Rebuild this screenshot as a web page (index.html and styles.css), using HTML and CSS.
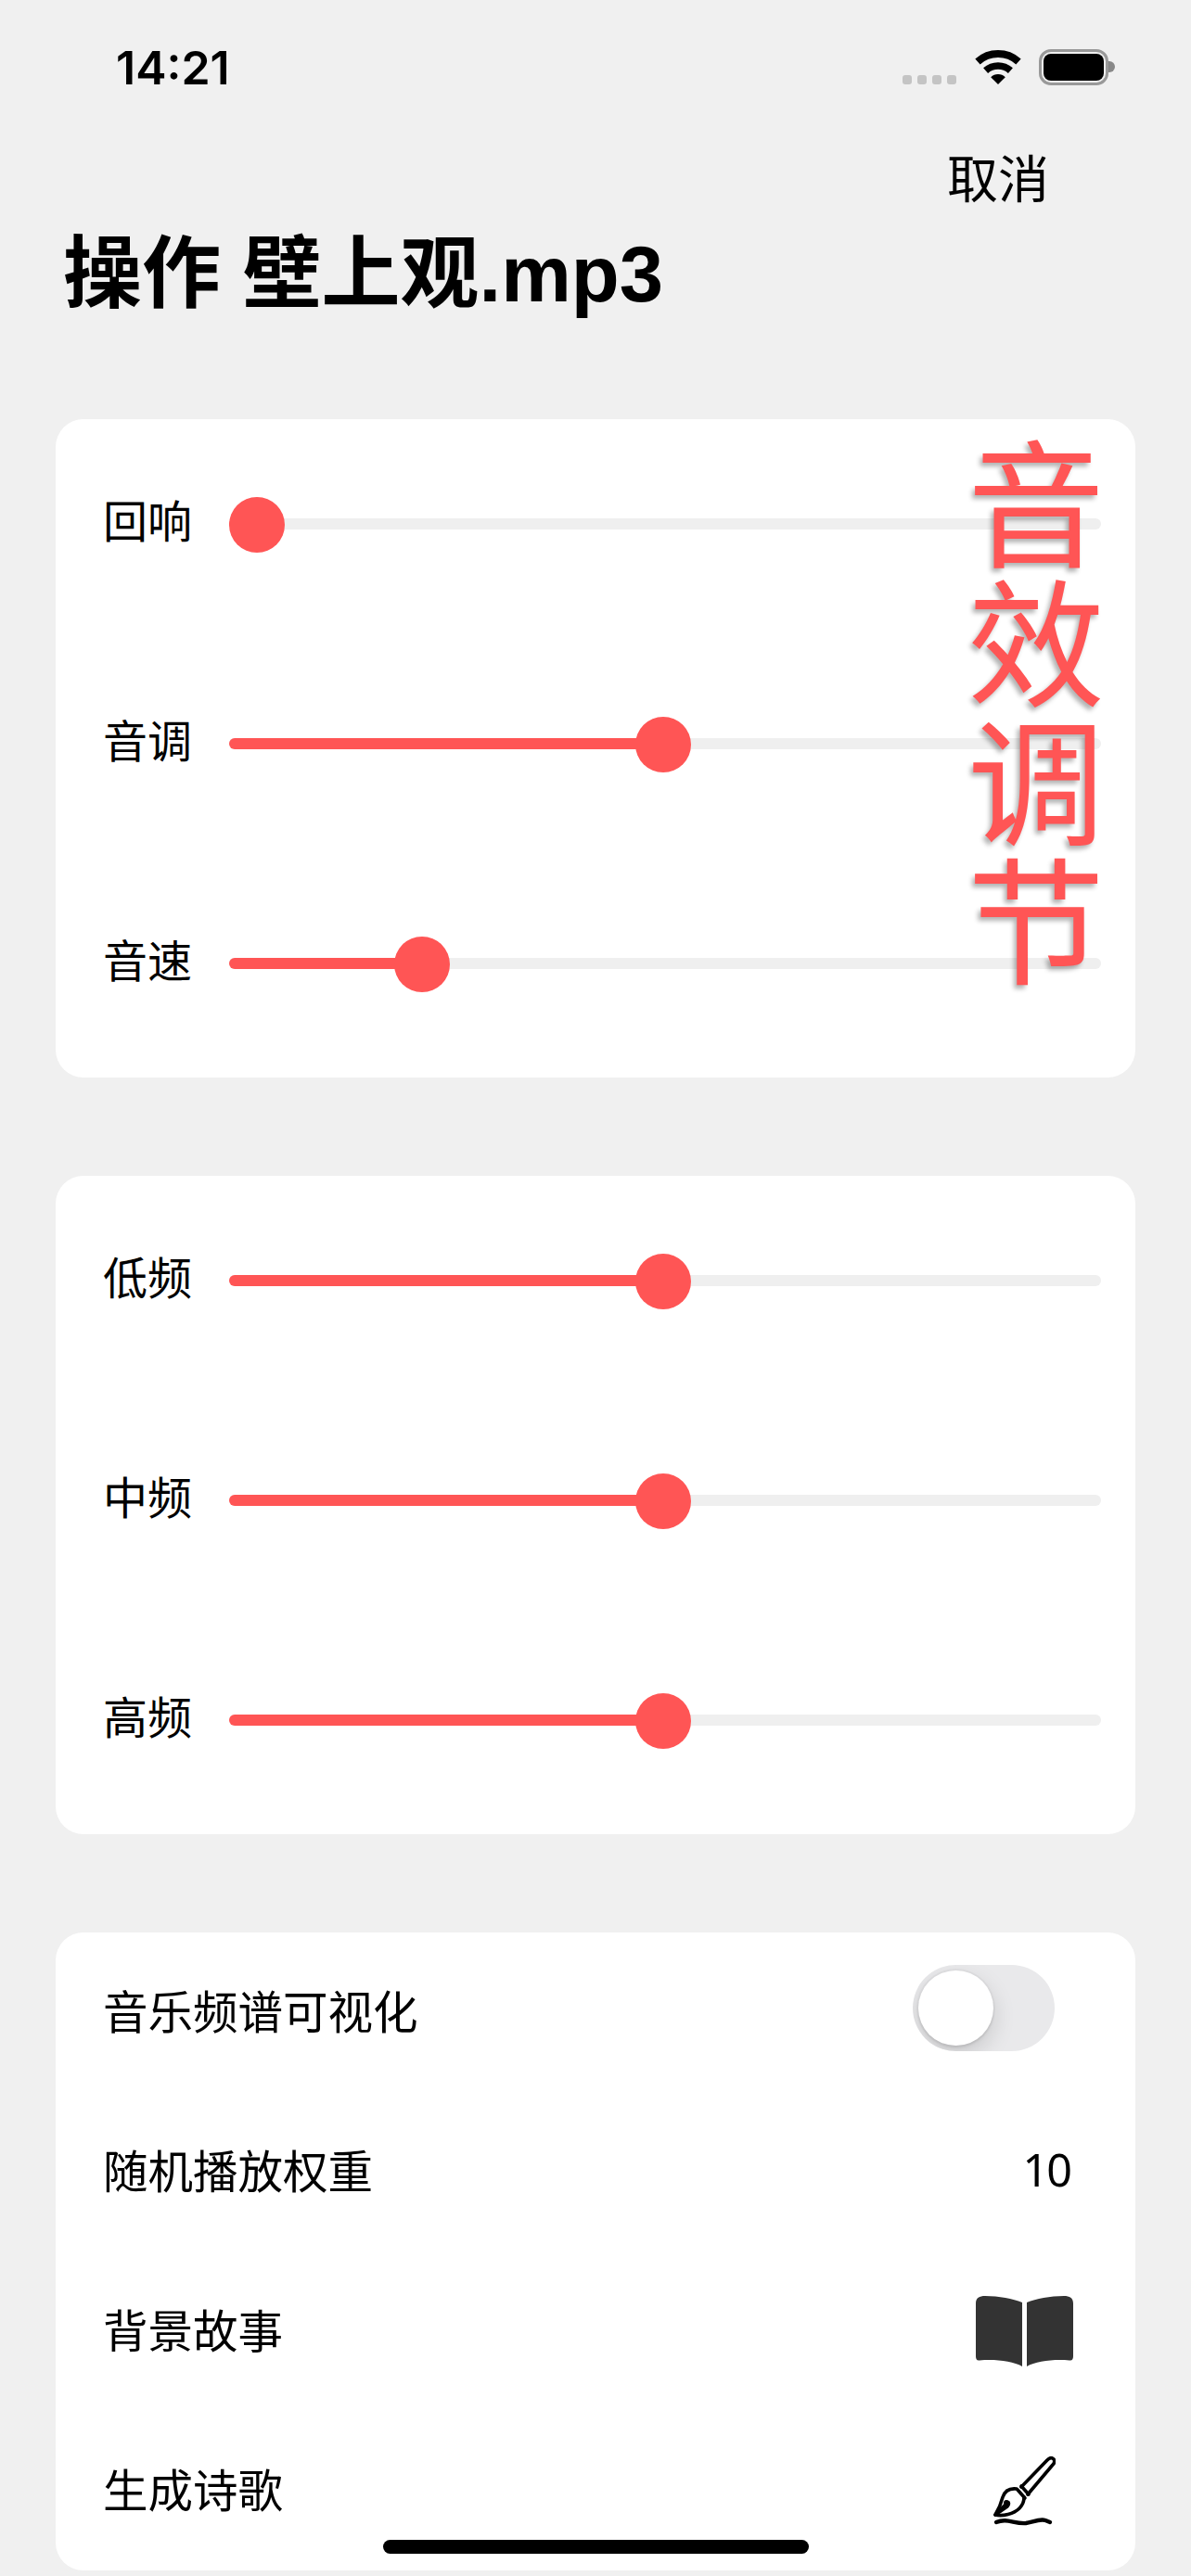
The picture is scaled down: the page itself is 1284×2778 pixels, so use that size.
FILE: index.html
```html
<!DOCTYPE html>
<html lang="zh-CN">
<head>
  <meta charset="UTF-8">
  <title>操作 壁上观.mp3</title>
  <link rel="stylesheet" href="styles.css">
</head>
<body>

<header class="status-bar">
  <span class="time">14:21</span>
  <div class="status-icons">
    <div class="signal"><i></i><i></i><i></i><i></i></div>
    <svg class="wifi" width="50" height="37" viewBox="0 0 50 37">
      <path d="M3 12.5A33 33 0 0 1 47 12.5" fill="none" stroke="#000" stroke-width="8"/>
      <path d="M11.6 22.1A20 20 0 0 1 38.4 22.1" fill="none" stroke="#000" stroke-width="7.5"/>
      <path d="M25 37L17.2 29.2A11 11 0 0 1 32.8 29.2Z"/>
    </svg>
    <div class="battery"><div class="battery-level"></div></div>
    <div class="battery-nub"></div>
  </div>
</header>

<div class="nav"><button class="cancel">取消</button></div>
<h1>操作 壁上观.mp3</h1>

<!-- sound effects -->
<section class="card sliders">
  <div class="row">
    <label>回响</label>
    <div class="slider" style="--value: 0"><div class="fill"></div><div class="thumb"></div></div>
  </div>
  <div class="row">
    <label>音调</label>
    <div class="slider" style="--value: 0.5"><div class="fill"></div><div class="thumb"></div></div>
  </div>
  <div class="row">
    <label>音速</label>
    <div class="slider" style="--value: 0.203"><div class="fill"></div><div class="thumb"></div></div>
  </div>
  <div class="watermark">音效调节</div>
</section>

<!-- equalizer -->
<section class="card sliders">
  <div class="row">
    <label>低频</label>
    <div class="slider" style="--value: 0.5"><div class="fill"></div><div class="thumb"></div></div>
  </div>
  <div class="row">
    <label>中频</label>
    <div class="slider" style="--value: 0.5"><div class="fill"></div><div class="thumb"></div></div>
  </div>
  <div class="row">
    <label>高频</label>
    <div class="slider" style="--value: 0.5"><div class="fill"></div><div class="thumb"></div></div>
  </div>
</section>

<section class="card options">
  <div class="option">
    <span>音乐频谱可视化</span>
    <div class="switch"><div class="switch-thumb"></div></div>
  </div>
  <div class="option">
    <span>随机播放权重</span>
    <span class="weight">10</span>
  </div>
  <div class="option">
    <span>背景故事</span>
    <svg class="book" width="105" height="76" viewBox="0 0 105 76" fill="#333">
      <path d="M0 8C0 2 4 0 10 0C25 0 40 3 50 7V76C40 70 20 68 4 69.5C1 70 0 68 0 65Z"/>
      <path d="M105 8C105 2 101 0 95 0C80 0 65 3 55 7V76C65 70 85 68 101 69.5C104 70 105 68 105 65Z"/>
    </svg>
  </div>
  <div class="option">
    <span>生成诗歌</span>
    <svg class="pen" width="67" height="75" viewBox="0 0 67 75" fill="none" stroke="#000" stroke-width="3.6" stroke-linecap="round" stroke-linejoin="round">
      <path d="M30 33L58 4Q62 0 65 3Q67 6 64 9L37 41"/>
      <path d="M26 36L34 45M30 32L38 41"/>
      <path d="M25 35C17 34 12 38 10 44C8 52 5 58 2 63C10 65 22 62 28 56C32 52 33 48 33 44"/>
      <path d="M2 63L13 52Q12 48 15 49Q18 50 15 54Z"/>
      <path d="M3 71C15 66 22 73 35 72C42 71 50 67 56 69L61 71" stroke-width="4.4"/>
    </svg>
  </div>
</section>

<div class="home-indicator"></div>

</body>
</html>
```

FILE: styles.css
```css
* {
  box-sizing: border-box;
}
html, body {
  margin: 0;
  height: 2778px;
}
body {
  position: relative;
  overflow: hidden;
  background: #f0f0f0;
  color: #000;
  font-family: "Liberation Sans", "Noto Sans CJK SC", sans-serif;
}

.status-bar {
  display: flex;
  justify-content: space-between;
  align-items: flex-end;
  height: 92px;
  padding: 0 82px 0 125px;
}
.time {
  font-family: Inter, sans-serif;
  font-size: 50px;
  font-weight: 600;
  line-height: 37px;
}
.status-icons {
  display: flex;
  align-items: flex-end;
}
.signal {
  display: flex;
  gap: 6px;
  margin-right: 20px;
  margin-bottom: 1px;
}
.signal i {
  width: 10px;
  height: 10px;
  border-radius: 3px;
  background: #c4c4c4;
}
.wifi {
  margin-right: 19px;
  margin-bottom: 1px;
}
.battery {
  width: 75px;
  height: 39px;
  padding: 2px;
  border: 3px solid #999;
  border-radius: 13px;
}
.battery-level {
  height: 100%;
  background: #000;
  border-radius: 8px;
}
.battery-nub {
  width: 7px;
  height: 12px;
  margin-bottom: 14px;
  background: #888;
  border-radius: 0 6px 6px 0;
}

.nav {
  display: flex;
  justify-content: flex-end;
  padding: 65px 153px 0 0;
}
.cancel {
  padding: 0;
  border: none;
  background: none;
  color: #000;
  font-family: "Noto Sans CJK SC", sans-serif;
  font-size: 55px;
  line-height: 64px;
}

h1 {
  margin: 25px 0 0 68px;
  font-size: 85px;
  font-weight: 700;
  line-height: 100px;
}

.card {
  position: relative;
  margin: 0 60px 106px;
  background: #fff;
  border-radius: 30px;
}
.sliders {
  display: flex;
  flex-direction: column;
  gap: 177px;
  padding: 83px 37px 93px 51px;
}
.sliders:first-of-type {
  margin-top: 106px;
}
.row {
  display: flex;
  align-items: center;
  height: 60px;
}
label {
  flex: none;
  width: 96px;
  margin-right: 40px;
  margin-top: -12px;
  font-family: "Noto Sans CJK SC", sans-serif;
  font-size: 48px;
  line-height: 60px;
}
.slider {
  position: relative;
  flex: 1;
  height: 12px;
  background: #efefef;
  border-radius: 6px;
}
.fill {
  height: 100%;
  width: calc(30px + var(--value) * 876px);
  background: #ff5555;
  border-radius: 6px;
}
.thumb {
  position: absolute;
  top: -23px;
  left: calc(var(--value) * 876px);
  width: 60px;
  height: 60px;
  background: #ff5555;
  border-radius: 50%;
}

/* big label lying over the sliders */
.watermark {
  position: absolute;
  top: 9px;
  right: 33px;
  width: 148px;
  color: #ff5555;
  font-family: "Noto Sans CJK SC", sans-serif;
  font-size: 148px;
  line-height: 150px;
  text-align: center;
  text-shadow: -3px 4px 5px rgba(0, 0, 0, 0.3);
}

.options {
  margin-bottom: 0;
  padding-left: 51px;
}
.option {
  display: flex;
  justify-content: space-between;
  align-items: center;
  height: 172px;
  font-family: "Noto Sans CJK SC", sans-serif;
  font-size: 48.5px;
}
.option span {
  padding-bottom: 6px;
}
.switch {
  width: 153px;
  height: 93px;
  margin: 0 87px 9px 0;
  padding: 6px;
  background: #e9e9eb;
  border-radius: 47px;
  overflow: hidden;
}
.switch-thumb {
  width: 81px;
  height: 81px;
  background: #fff;
  border-radius: 50%;
  box-shadow: 0 9px 24px rgba(0, 0, 0, 0.15), 0 3px 3px rgba(0, 0, 0, 0.06), 0 0 0 2px rgba(0, 0, 0, 0.03);
}
.option .weight {
  margin-right: 70px;
  letter-spacing: -2px;
  font-family: "Noto Sans", sans-serif;
}
.book {
  margin-right: 67px;
}
.pen {
  margin: 0 86px 0 0;
}

.home-indicator {
  position: absolute;
  left: 413px;
  bottom: 24px;
  width: 459px;
  height: 15px;
  background: #000;
  border-radius: 8px;
}
```
